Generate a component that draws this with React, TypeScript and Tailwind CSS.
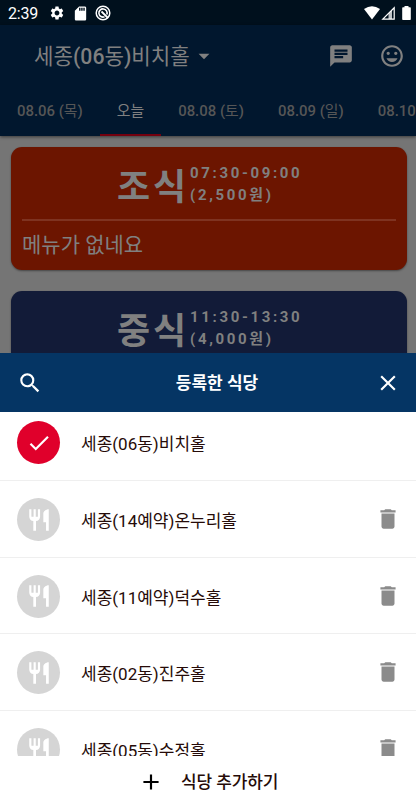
import React from "react";
import {
  MdAdd,
  MdArrowDropDown,
  MdChat,
  MdCheck,
  MdClose,
  MdDelete,
  MdInsertEmoticon,
  MdRestaurant,
  MdSdStorage,
  MdSearch,
  MdSettings,
} from "react-icons/md";

const days = [
  { label: "08.06 (목)", active: false },
  { label: "오늘", active: true },
  { label: "08.08 (토)", active: false },
  { label: "08.09 (일)", active: false },
  { label: "08.10 (월)", active: false },
];

const restaurants = [
  { name: "세종(06동)비치홀", selected: true },
  { name: "세종(14예약)온누리홀", selected: false },
  { name: "세종(11예약)덕수홀", selected: false },
  { name: "세종(02동)진주홀", selected: false },
  { name: "세종(05동)수정홀", selected: false },
];

// Digits and brackets are set in the medium weight, Hangul in the regular one.
function Mixed({ text }: { text: string }) {
  return (
    <span className="whitespace-pre">
      {text.split(/([0-9.()]+)/).map((part, i) => (
        <span key={i} className={i % 2 ? "font-medium" : "font-normal"}>
          {part}
        </span>
      ))}
    </span>
  );
}

function StatusBar() {
  return (
    <div className="flex h-[25px] shrink-0 items-center bg-[#00101d] pl-[8px] pr-[5px] text-white">
      <span className="w-[41px] pt-[2px] text-[16px] leading-[25px] tracking-[-0.2px]">2:39</span>
      <MdSettings className="mt-[1px] size-[16px]" />
      <MdSdStorage className="ml-[7px] mt-[1px] size-[17px]" />
      <svg className="ml-[6px] mt-[1px] size-[16px]" viewBox="0 0 16 16" fill="none" stroke="currentColor">
        <circle cx="8" cy="8" r="6.8" strokeWidth="1.5" />
        <path d="M11.800 9.500A4.100 4.100 0 1 0 9.500 11.800" strokeWidth="1.600" />
        <path d="M6.500 6.500L13 13" strokeWidth="1.800" />
      </svg>
      <svg className="ml-auto h-[14px] w-[16px]" viewBox="0 0 16 14" fill="currentColor">
        <path d="M0 3Q8-2.500 16 3L8 13.500Z" />
      </svg>
      <svg className="ml-[1px] h-[14px] w-[14px]" viewBox="0 0 14 14">
        <path d="M1.800 13.200H13.200V1.800Z" fill="none" stroke="currentColor" strokeWidth="1.200" />
        <path d="M7.500 13V7.500L11 4V13Z" fill="currentColor" opacity=".75" />
      </svg>
      <svg className="ml-[7px] h-[14px] w-[9px]" viewBox="0 0 9 14" fill="currentColor">
        <path d="M2.500 0h4v1.200H8a.8.8 0 0 1 .8.8v11.200a.8.8 0 0 1-.8.8H1a.8.8 0 0 1-.8-.8V2A.8.8 0 0 1 1 1.200h1.500Z" />
      </svg>
    </div>
  );
}

function MealCard({ title, time, price, color, body }: { title: string; time: string; price: string; color: string; body?: string }) {
  return (
    <section className={`ml-[11px] mr-[9px] h-[123px] shrink-0 rounded-[11px] px-[11px] text-[#808080] shadow-[0_1px_2px_rgba(0,0,0,.4)] ${color}`}>
      <div className="flex h-[72px] items-start pl-[95px] pt-[15px]">
        <h2 className="w-[73px] pt-[2px] text-[36px] font-bold leading-[48px] tracking-[3px]">{title}</h2>
        <div className="text-[15px] font-bold leading-[22px] tracking-[2.65px]">
          <p>{time}</p>
          <p>{price}</p>
        </div>
      </div>
      <div className="h-[2px] bg-white/13" />
      {body && <p className="pt-[9px] text-[21px] leading-[30px]">{body}</p>}
    </section>
  );
}

export default function App() {
  return (
    <div className="flex h-[800px] w-[416px] flex-col overflow-hidden bg-[#757575] font-['Roboto','Noto_Sans_CJK_KR',sans-serif]">
      <StatusBar />
      <header className="flex h-[111px] shrink-0 flex-col bg-[#01172e] text-[#808080] shadow-[0_1px_3px_rgba(0,0,0,.5)]">
        <div className="flex h-[61px] items-center pl-[34px] pr-[11px]">
          <h1 className="whitespace-nowrap pt-[3px] text-[21.2px]">
            <Mixed text="세종(06동)비치홀" />
          </h1>
          <MdArrowDropDown className="ml-[1px] size-[26px]" />
          <MdChat className="ml-auto size-[26px]" />
          <MdInsertEmoticon className="ml-[25px] size-[26px]" />
        </div>
        <nav className="flex h-[50px] overflow-hidden text-[14.9px]">
          {days.map((day) => (
            <div
              key={day.label}
              className={
                day.active
                  ? "flex h-[50px] shrink-0 items-center whitespace-nowrap border-b-2 border-[#73000f] px-[17px] pt-[3px]"
                  : "flex h-[50px] shrink-0 items-center whitespace-nowrap border-b-2 border-transparent px-[17px] pt-[3px] text-[#565656]"
              }
            >
              <Mixed text={day.label} />
            </div>
          ))}
        </nav>
      </header>
      <main className="flex h-[217px] shrink-0 flex-col gap-[21px] overflow-hidden pt-[11px]">
        <MealCard title="조식" time="07:30-09:00" price="(2,500원)" color="bg-[#6c1500]" body="메뉴가 없네요" />
        <MealCard title="중식" time="11:30-13:30" price="(4,000원)" color="bg-[#121b38]" />
      </main>
      <section className="flex h-[447px] shrink-0 flex-col bg-white text-[#260b08]">
        <div className="flex h-[59px] shrink-0 items-center justify-between bg-[#053564] pl-[17px] pr-[16px] text-white">
          <MdSearch className="size-[26px]" />
          <h2 className="ml-[16px] pt-[3px] text-[17px] font-bold">등록한 식당</h2>
          <MdClose className="-mr-[1px] size-[26px]" />
        </div>
        <ul className="h-[344px] overflow-hidden">
          {restaurants.map((item, i) => (
            <li
              key={item.name}
              className={
                i === 0
                  ? "flex h-[69px] items-start border-b border-[#efefef] pl-[17px] pr-[15px] pt-[9px]"
                  : "flex h-[76.5px] items-start border-b border-[#efefef] pl-[17px] pr-[15px] pt-[17px]"
              }
            >
              <span
                className={
                  item.selected
                    ? "flex size-[43px] items-center justify-center rounded-full bg-[#e0002b] text-white"
                    : "flex size-[43px] items-center justify-center rounded-full bg-[#d5d5d5] text-white"
                }
              >
                {item.selected ? <MdCheck className="size-[26px]" /> : <MdRestaurant className="size-[26px]" />}
              </span>
              <span className="ml-[21px] mt-[10px] whitespace-nowrap text-[17px] leading-[26px]">{item.name}</span>
              {!item.selected && <MdDelete className="ml-auto mt-[8px] size-[26px] text-[#8b8b8b]" />}
            </li>
          ))}
        </ul>
        <button className="flex h-[44px] items-center pl-[138px] pt-[8px] text-[17px] font-medium">
          <MdAdd className="-mt-px size-[26px] text-black" />
          <span className="ml-[17px] pt-[2px] tracking-[-0.1px]">식당 추가하기</span>
        </button>
      </section>
    </div>
  );
}
